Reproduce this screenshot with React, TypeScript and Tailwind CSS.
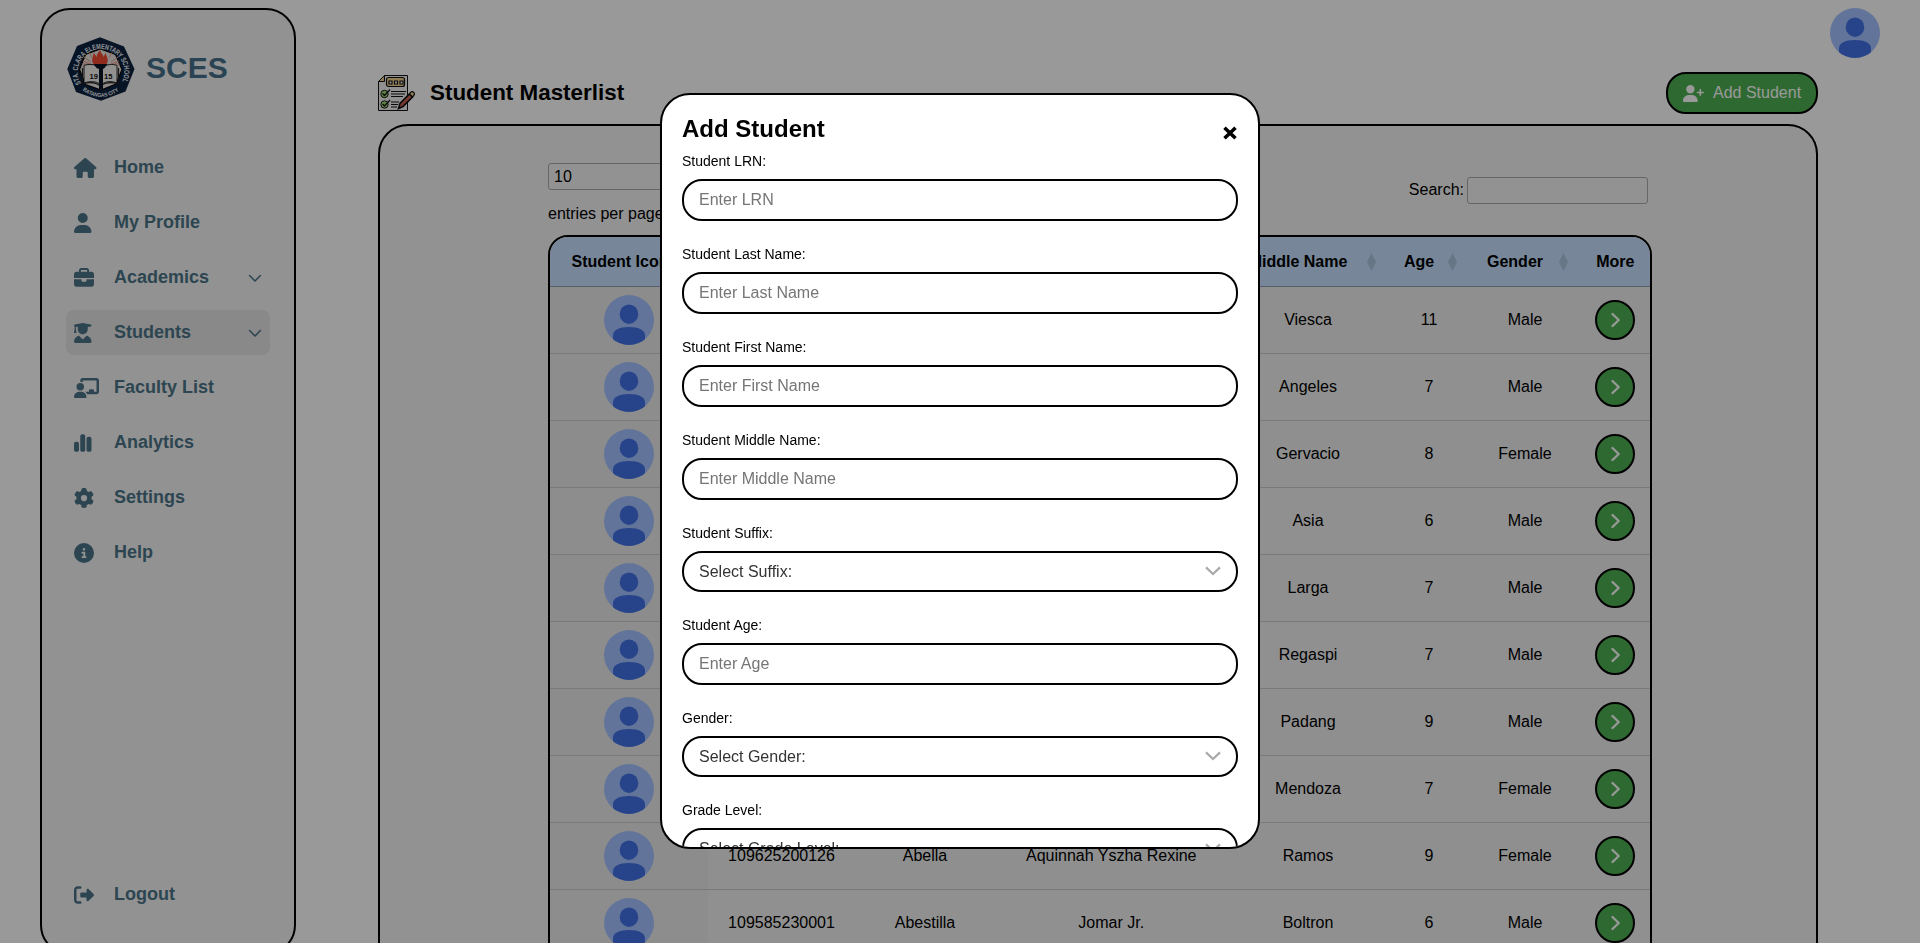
import React from "react";
import {
  FaHouse,
  FaUser,
  FaBriefcase,
  FaUserGraduate,
  FaChalkboardUser,
  FaChartSimple,
  FaGear,
  FaCircleInfo,
  FaRightFromBracket,
  FaUserPlus,
} from "react-icons/fa6";
import type { IconType } from "react-icons";

type NavEntry = { label: string; icon: IconType; iconWidth: string; expandable?: boolean; active?: boolean };

const navEntries: NavEntry[] = [
  { label: "Home", icon: FaHouse, iconWidth: "w-[22.5px]" },
  { label: "My Profile", icon: FaUser, iconWidth: "w-[17.5px]" },
  { label: "Academics", icon: FaBriefcase, iconWidth: "w-5", expandable: true },
  { label: "Students", icon: FaUserGraduate, iconWidth: "w-[17.5px]", expandable: true, active: true },
  { label: "Faculty List", icon: FaChalkboardUser, iconWidth: "w-[25px]" },
  { label: "Analytics", icon: FaChartSimple, iconWidth: "w-[17.5px]" },
  { label: "Settings", icon: FaGear, iconWidth: "w-5" },
  { label: "Help", icon: FaCircleInfo, iconWidth: "w-5" },
];

const columns = [
  "Student Icon",
  "LRN",
  "Last Name",
  "First Name",
  "Middle Name",
  "Age",
  "Gender",
];

type Student = { lrn?: string; last?: string; first?: string; middle: string; age: number; gender: string };

const students: Student[] = [
  { middle: "Viesca", age: 11, gender: "Male" },
  { middle: "Angeles", age: 7, gender: "Male" },
  { middle: "Gervacio", age: 8, gender: "Female" },
  { middle: "Asia", age: 6, gender: "Male" },
  { middle: "Larga", age: 7, gender: "Male" },
  { middle: "Regaspi", age: 7, gender: "Male" },
  { middle: "Padang", age: 9, gender: "Male" },
  { middle: "Mendoza", age: 7, gender: "Female" },
  { lrn: "109625200126", last: "Abella", first: "Aquinnah Yszha Rexine", middle: "Ramos", age: 9, gender: "Female" },
  { lrn: "109585230001", last: "Abestilla", first: "Jomar Jr.", middle: "Boltron", age: 6, gender: "Male" },
];

type Field = { label: string; hint: string; select?: boolean };

const fields: Field[] = [
  { label: "Student LRN:", hint: "Enter LRN" },
  { label: "Student Last Name:", hint: "Enter Last Name" },
  { label: "Student First Name:", hint: "Enter First Name" },
  { label: "Student Middle Name:", hint: "Enter Middle Name" },
  { label: "Student Suffix:", hint: "Select Suffix:", select: true },
  { label: "Student Age:", hint: "Enter Age" },
  { label: "Gender:", hint: "Select Gender:", select: true },
  { label: "Grade Level:", hint: "Select Grade Level:", select: true },
];

function Avatar() {
  return (
    <svg viewBox="0 0 50 50" className="block size-[50px] shrink-0">
      <defs>
        <clipPath id="avatar-disc">
          <circle cx="25" cy="25" r="25" />
        </clipPath>
      </defs>
      <g clipPath="url(#avatar-disc)">
        <rect width="50" height="50" fill="#a4c2ff" />
        <ellipse cx="25" cy="19.2" rx="9.3" ry="9.7" fill="#4272e6" />
        <path d="M9 43V40.500C9 35 15 32 25 32s16 3 16 8.500V50H9z" fill="#4272e6" />
      </g>
    </svg>
  );
}

function SchoolSeal() {
  return (
    <svg viewBox="0 0 68 64" className="block h-16 w-[68px]">
      <defs>
        <path id="seal-top" d="M14 46.500A23.300 22.800 0 1 1 54 46.500" />
        <path id="seal-bottom" d="M13.500 51A28 28 0 0 0 54.500 51" />
      </defs>
      <path d="M33 .3 57 9.500 67.500 32 58.500 54.500 34 63.800 9 55 .3 32 10 9z" fill="#0b2240" />
      <path d="M33.500 12 48.500 17.500 55 32.500 49 47 34 53 18.500 47.500 12.500 32.500 18.500 17.500z" fill="#e9e5e0" stroke="#0a0a0a" strokeWidth="1.200" />
      <path d="m16 24 8 3M17 20l7 5M22 15.500l3 5M52 24l-8 3M51 20l-7 5M45 15.500l-3 5M15.500 27h8M52.500 27h-8" stroke="#e89a8c" strokeWidth="1" />
      <path d="M26.500 27c-3-4 0-7 0-11 2 1 2 3 3 4 0-3 2-5 4-7 0 4 3 4 3 7 1-1 1-3 2-4 1 4 4 7 1 11z" fill="#f04a32" />
      <path d="M17 28.500c5-2 11-1 16 1.500v17c-5-3-10-3-16-1zM50 28.500c-5-2-10-1-15 1.500v17c5-3 9-3 15-1z" fill="#f4f2ee" stroke="#111" strokeWidth=".9" />
      <path d="M15.500 31v16c6-2 13-2 18 2 5-4 12-4 18-2V31" fill="none" stroke="#222" strokeWidth="1.200" />
      <path d="M26.500 27h14l-3 4-1.500 1v20h-4V32l-2.500-1z" fill="#0b1526" />
      <text x="22.500" y="41.500" fontSize="7.500" className="font-bold" fill="#111">19</text>
      <text x="37" y="41.500" fontSize="7.500" className="font-bold" fill="#111">15</text>
      <text fontSize="7.400" fill="#f2f5fa" className="font-bold">
        <textPath href="#seal-top" textLength="94" lengthAdjust="spacingAndGlyphs">STA. CLARA ELEMENTARY SCHOOL</textPath>
      </text>
      <text fontSize="5.400" fill="#f2f5fa" className="font-bold">
        <textPath href="#seal-bottom" startOffset="3" textLength="39" lengthAdjust="spacingAndGlyphs">BATANGAS CITY</textPath>
      </text>
    </svg>
  );
}

function ChecklistIcon() {
  return (
    <svg viewBox="0 0 37 36" className="block h-9 w-[37px]" fill="none" stroke="#111" strokeWidth="1">
      <path d="M6.500.5h23v35H.5v-29z" fill="#f2f2f2" />
      <path d="M.5 6.500h6v-6z" fill="#f0cf8a" />
      <rect x="8.500" y="2.500" width="18" height="9" rx="2" fill="#f0cf8a" strokeWidth="1.200" />
      <path d="M11 6h3v3h-3zM16.500 6h3v3h-3zM22 6h3v3h-3z" fill="#fff" strokeWidth="1.200" />
      <circle cx="6.500" cy="19" r="3.700" fill="#a4dc78" />
      <circle cx="6.500" cy="29.500" r="3.700" fill="#a4dc78" />
      <path d="m4.500 18.500 2 2 5.500-6M4.500 29l2 2 5.500-6" strokeWidth="1.300" />
      <path d="M13 16.500h15M13 19h14M13 21.500h12M13 27h8M13 29.500h7M13 32h6" />
      <path d="m20.500 33.500 1.500-5L31.500 19l3 3-9.500 9.500z" fill="#c9604f" strokeWidth="1.600" />
      <path d="m31.500 19 3 3L36.200 20c.8-2-1-4-3.200-3z" fill="#f0cf8a" strokeWidth="1.200" />
    </svg>
  );
}

function Chevron() {
  return (
    <svg viewBox="0 0 14 9" className="block h-[9px] w-[14px]" fill="none" stroke="currentColor" strokeWidth="1.600" strokeLinecap="round" strokeLinejoin="round">
      <path d="m1.600 1.500 5.400 5.500 5.400-5.500" />
    </svg>
  );
}

function NavRow({ label, icon: Icon, iconWidth, expandable, active }: NavEntry) {
  return (
    <a className={`flex h-[45px] items-center rounded-lg pr-2 pl-2 ${active ? "bg-[#e4e4e4]" : ""}`}>
      <span className="flex w-10 shrink-0">
        <Icon className={`h-5 ${iconWidth}`} />
      </span>
      <span className="grow pb-0.5 text-lg leading-none font-bold">{label}</span>
      {expandable && (
        <span className="pt-0.5">
          <Chevron />
        </span>
      )}
    </a>
  );
}

function Sidebar() {
  return (
    <aside className="mt-2 ml-10 flex h-[947px] w-64 shrink-0 flex-col rounded-[30px] border-2 border-black bg-[#f4f4f4] px-6 text-[#4b7488]">
      <div className="mt-[27px] flex h-16 items-center pl-px">
        <SchoolSeal />
        <span className="ml-[11px] pb-0.5 text-[30px] leading-none font-bold text-[#457089]">SCES</span>
      </div>
      <nav className="mt-11 flex flex-col gap-2.5">
        {navEntries.map((entry) => (
          <NavRow key={entry.label} {...entry} />
        ))}
      </nav>
      <div className="mt-auto mb-9">
        <NavRow label="Logout" icon={FaRightFromBracket} iconWidth="w-5" />
      </div>
    </aside>
  );
}

const gridCols = "grid grid-cols-[158px_147px_140px_232.5px_161px_81px_111px_69.5px]";

function StudentTable() {
  return (
    <div className="mt-[9px] h-[760px] overflow-hidden rounded-[20px] border-2 border-black">
      <div className={`${gridCols} h-[50px] border-b border-black/30 bg-[#c6e2ff] text-center font-bold`}>
        {columns.map((name) => (
          <div key={name} className={`flex items-center justify-center ${name === "Student Icon" ? "pl-3" : "pl-2.5"}`}>
            <span className="grow">{name}</span>
            <svg viewBox="0 0 9 18" className="mr-[13px] ml-2 h-[18px] w-[9px] shrink-0 opacity-[.125]">
              <path d="M4.500 0 9 9 4.500 18 0 9z" />
            </svg>
          </div>
        ))}
        <div className="flex items-center justify-center">More</div>
      </div>
      {students.map((s, i) => (
        <div
          key={i}
          className={`${gridCols} h-[67px] items-center border-b border-black/15 text-center ${i % 2 === 0 ? "bg-[#eeeeee]" : "bg-[#f0f0f0]"}`}
        >
          <div className="flex h-full items-center justify-center bg-black/[.02]">
            <Avatar />
          </div>
          <div>{s.lrn}</div>
          <div>{s.last}</div>
          <div>{s.first}</div>
          <div>{s.middle}</div>
          <div>{s.age}</div>
          <div>{s.gender}</div>
          <div className="flex justify-center pr-px">
            <button className="flex size-10 items-center justify-center rounded-full border-2 border-black bg-[#4caf50] text-white">
              <svg viewBox="0 0 10 16" className="ml-0.5 h-4 w-2.5" fill="none" stroke="currentColor" strokeWidth="2.300" strokeLinecap="round" strokeLinejoin="round">
                <path d="m1.500 2 6.200 6-6.200 6" />
              </svg>
            </button>
          </div>
        </div>
      ))}
    </div>
  );
}

function MainArea() {
  return (
    <main className="ml-[82px] flex grow flex-col pr-[102px]">
      <div className="mt-[72px] flex h-[42px] items-center">
        <ChecklistIcon />
        <h1 className="ml-[15px] text-[22.400px] leading-none font-bold">Student Masterlist</h1>
        <button className="ml-auto flex h-[42px] w-[152px] items-center rounded-[20px] border-2 border-black bg-[#4caf50] pl-[15px] text-white">
          <FaUserPlus className="h-[17px] w-[21px]" />
          <span className="ml-[9px]">Add Student</span>
        </button>
      </div>
      <section className="mt-2.5 h-[900px] shrink-0 rounded-[30px] border-2 border-black bg-[#f4f4f4]">
        <div className="ml-[168px] w-[1104px] pt-[37px]">
          <div className="flex items-center justify-between">
            <div>
              <div className="flex h-[27px] w-[180px] items-center rounded-[3px] border border-[#aaa] pl-[5px]">10</div>
              <div className="mt-3 leading-6">entries per page</div>
            </div>
            <label className="mr-1 flex items-center gap-[3px] pb-[9px]">
              Search:
              <span className="h-[27px] w-[181px] rounded-[3px] border border-[#aaa]" />
            </label>
          </div>
          <StudentTable />
        </div>
      </section>
    </main>
  );
}

function FormField({ label, hint, select }: Field) {
  return (
    <div className="mb-[25px]">
      <label className="block text-sm leading-4">{label}</label>
      <div
        className={`mt-2.5 flex items-center justify-between rounded-[20px] border-2 border-black pr-[15px] pl-[15px] ${
          select ? "h-[41px] text-[#333]" : "h-[42px] text-[#757575]"
        }`}
      >
        <span>{hint}</span>
        {select && (
          <svg viewBox="0 0 16 10" className="mb-0.5 h-2.5 w-4" fill="none" stroke="#aaa" strokeWidth="2.300">
            <path d="m1 1.300 7 6.700 7-6.700" />
          </svg>
        )}
      </div>
    </div>
  );
}

function AddStudentModal() {
  return (
    <div className="fixed inset-0 flex justify-center bg-black/40">
      <div className="mt-[93px] h-[756px] w-[600px] overflow-hidden rounded-[30px] border-2 border-black bg-white p-5">
        <div className="mb-[11px] flex h-[27px] justify-between">
          <h2 className="text-2xl leading-[27px] font-bold">Add Student</h2>
          <svg viewBox="0 0 14 14" className="mt-[11px] mr-px size-3.5" fill="none" stroke="currentColor" strokeWidth="3.600">
            <path d="m1.500 1.800 11 10.400M12.500 1.800 1.500 12.200" />
          </svg>
        </div>
        {fields.map((field) => (
          <FormField key={field.label} {...field} />
        ))}
      </div>
    </div>
  );
}

export default function App() {
  return (
    <div className="relative flex h-[943px] w-[1920px] overflow-hidden bg-white font-['Liberation_Sans',Arial,sans-serif] text-base text-black">
      <Sidebar />
      <MainArea />
      <div className="absolute top-2 right-10">
        <Avatar />
      </div>
      <AddStudentModal />
    </div>
  );
}
